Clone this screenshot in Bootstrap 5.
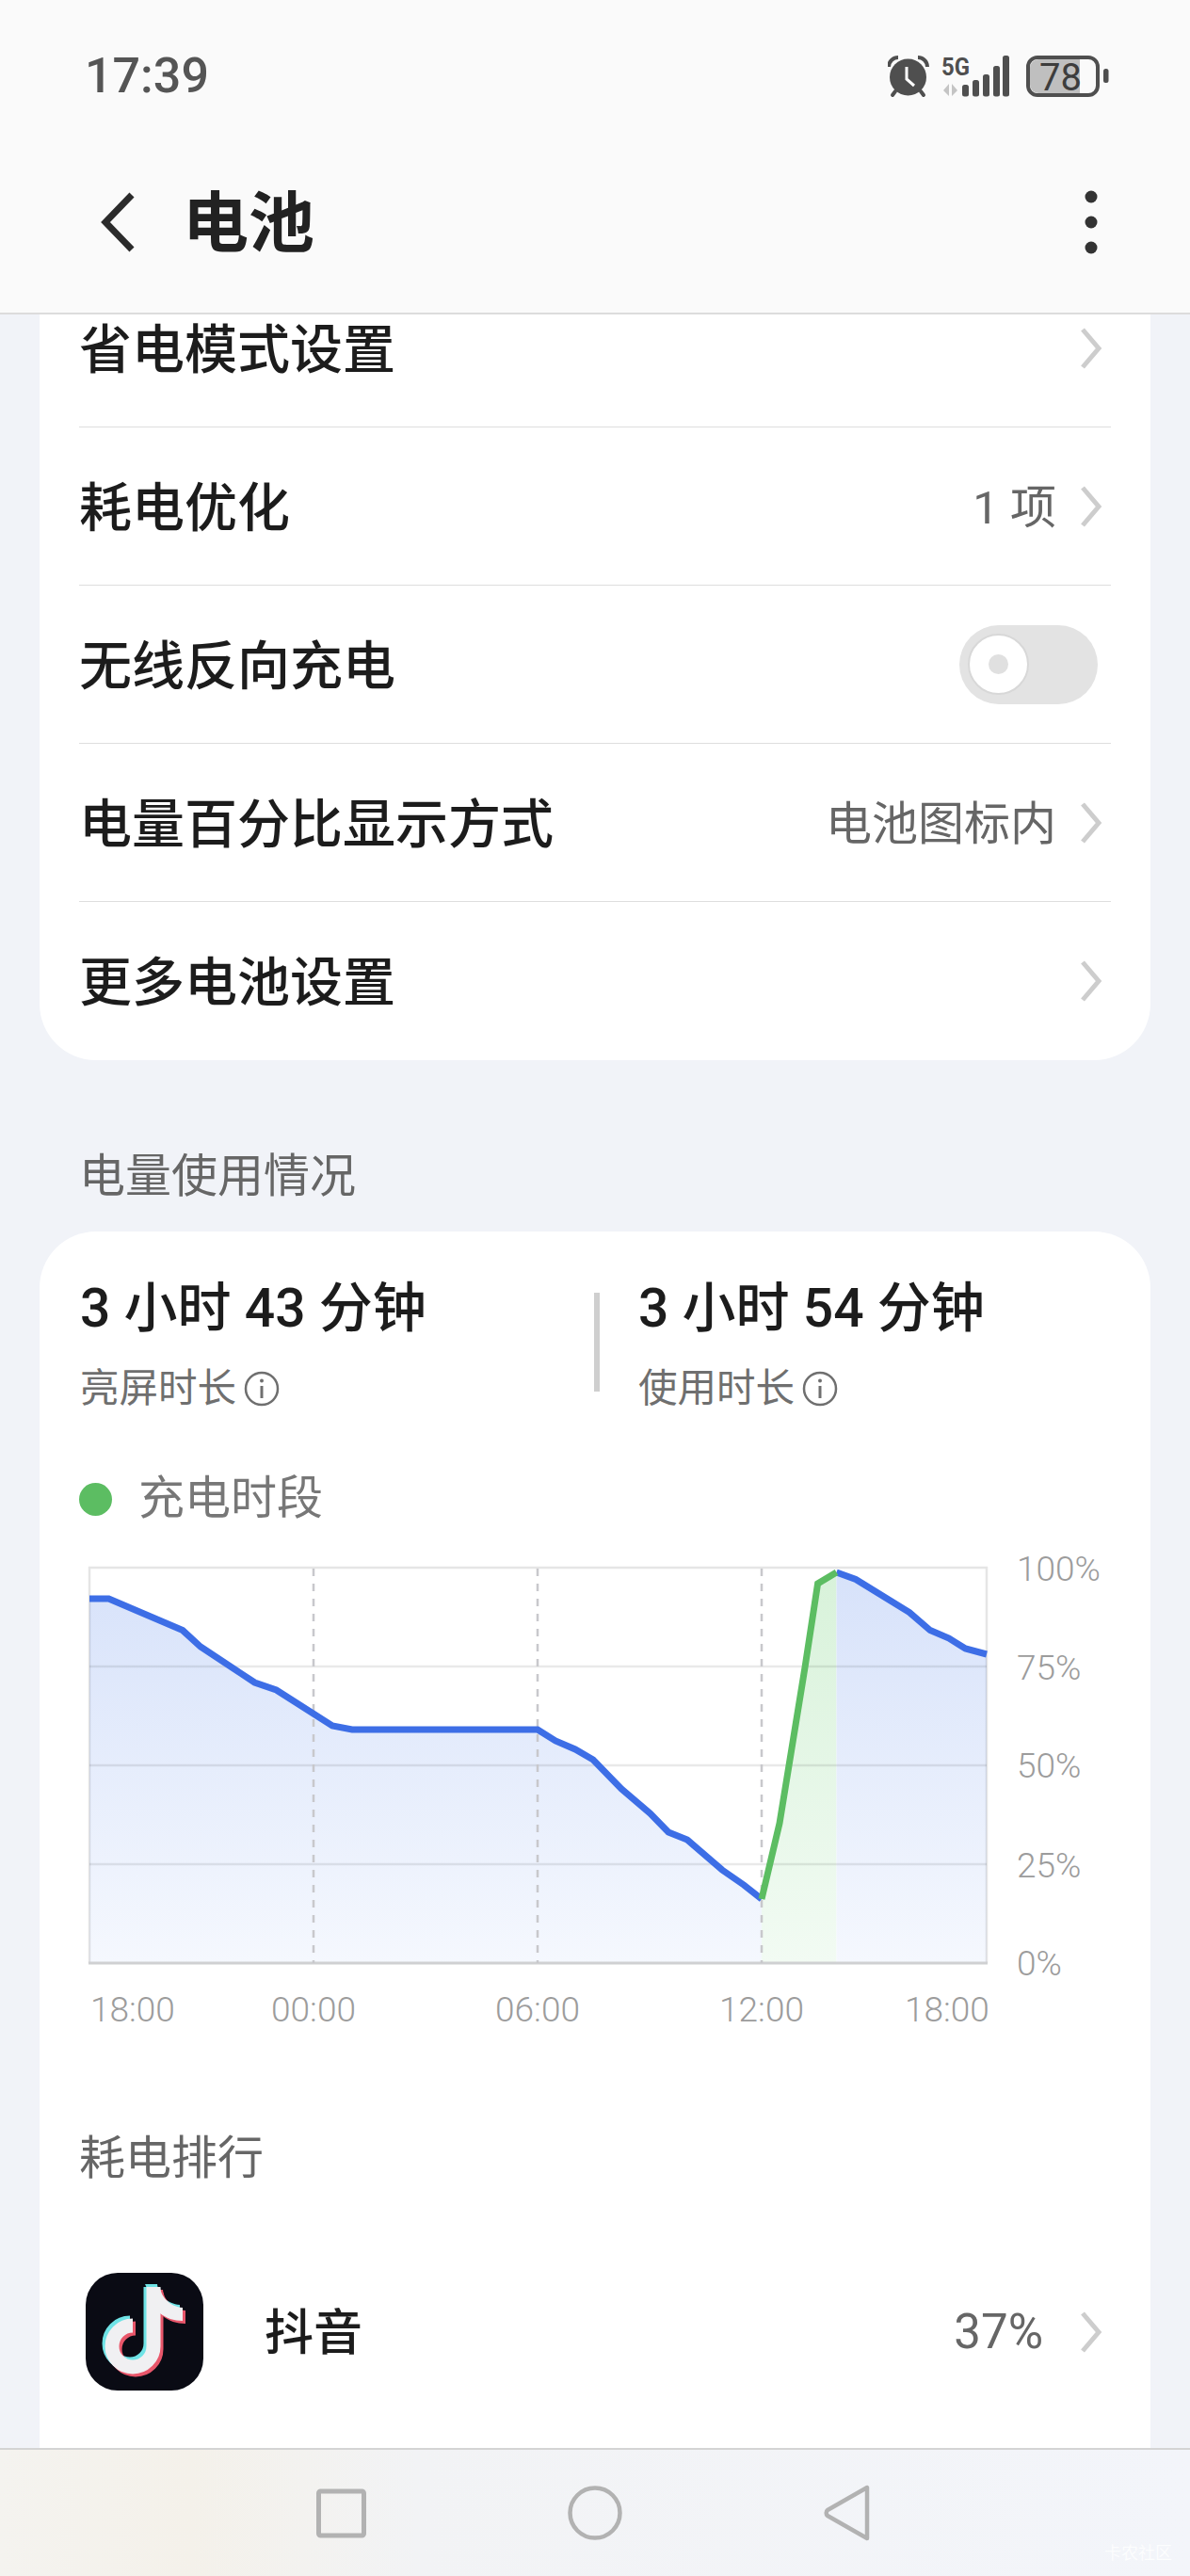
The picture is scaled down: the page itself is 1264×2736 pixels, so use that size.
<!DOCTYPE html>
<html lang="zh-CN">
<head>
  <meta charset="UTF-8">
  <title>电池</title>
  <meta name="viewport" content="width=device-width, initial-scale=1" />
  <link href="https://cdn.jsdelivr.net/npm/bootstrap@5.3.0/dist/css/bootstrap.min.css" rel="stylesheet">
  <style>
    html, body {
      margin: 0;
      height: 2736px;
      overflow: hidden;
    }

    body {
      background-color: #f1f3f8;
      font-family: Roboto, "Noto Sans CJK SC", sans-serif;
      color: #1c1c1c;
    }

    .phone {
      height: 2736px;
    }

    .top-area {
      height: 334px;
      flex: none;
      background-color: #fafafa;
      border-bottom: 2px solid #dcdcdc;
      position: relative;
      z-index: 2;
    }

    .status-row {
      height: 150px;
      padding: 12px 86px 0 90px;
    }

    .clock {
      font-size: 52px;
      font-weight: 500;
      color: #555;
    }

    .title-row {
      height: 172px;
      padding: 0 98px 0 106px;
    }

    .page-name {
      font-size: 70px;
      font-weight: 700;
      line-height: 1;
      margin-left: 50px;
      padding-top: 3px;
      color: #222;
    }

    .scroll-area {
      min-height: 0;
      overflow: hidden;
    }

    .scroll-inner {
      margin-top: -48px;
      padding: 0 42px;
    }

    .panel {
      border: 0;
      border-radius: 60px;
      background-color: #fff;
    }

    .panel-top {
      border-radius: 0 0 60px 60px;
    }

    .panel-bottom {
      border-radius: 60px 60px 0 0;
      padding: 48px 0 0 42px;
      height: 1400px;
    }

    .set-row {
      height: 168px;
      margin: 0 42px;
      padding: 0 9px 0 0;
      background: transparent;
      border-color: #dedede;
      border-width: 0 0 2px;
      font-size: 56px;
      font-weight: 500;
      color: #1c1c1c;
    }

    .set-row:last-child {
      border-bottom: 0;
    }

    .set-text {
      padding-top: 4px;
    }

    .set-value {
      font-size: 49px;
      font-weight: 400;
      color: #666;
      margin-right: 25px;
      padding-top: 4px;
    }

    .sw-track {
      width: 147px;
      height: 84px;
      margin-right: 5px;
      border-radius: 42px;
      background-color: #e3e3e3;
      padding-left: 9px;
    }

    .sw-knob {
      width: 65px;
      height: 65px;
      border-radius: 50%;
      background-color: #fff;
      border: 2px solid #d8d8d8;
    }

    .sw-dot {
      width: 21px;
      height: 21px;
      border-radius: 50%;
      background-color: #e0e0e0;
    }

    .group-label {
      font-size: 49px;
      line-height: 68px;
      color: #666;
      margin-left: 42px;
    }

    .label-usage {
      padding: 90px 0 24px;
    }

    .stat-left {
      width: 547px;
      flex: none;
      padding-left: 1px;
    }

    .stat-time {
      font-size: 57px;
      line-height: 68px;
      font-weight: 500;
    }

    .stat-sub {
      font-size: 41.500px;
      line-height: 60px;
      margin-top: 21px;
      color: #6f6f6f;
    }

    .stat-bar {
      width: 6px;
      height: 105px;
      margin: 17px 41px 0 0;
      background-color: #cfcfcf;
      flex: none;
    }

    .charge-row {
      font-size: 49px;
      line-height: 60px;
      color: #777;
      margin-top: 57px;
    }

    .charge-dot {
      width: 35px;
      height: 35px;
      border-radius: 50%;
      background-color: #5cbd62;
      margin-right: 28px;
    }

    .chart-box {
      display: block;
      width: 1180px;
      height: 530px;
      margin: 18px 0 0 -42px;
    }

    .chart-box text {
      font-family: Roboto, sans-serif;
      font-size: 37px;
      font-weight: 300;
      fill: #9c9c9c;
    }

    .label-rank {
      margin: 89px 0 87px 1px;
    }

    .app-row {
      margin-left: 7px;
      padding-right: 51px;
    }

    .app-name {
      font-size: 52px;
      margin-left: 65px;
      padding-top: 5px;
      font-weight: 500;
    }

    .app-share {
      font-size: 51px;
      color: #666;
      margin-right: 39px;
      padding-top: 2px;
    }

    .bottom-nav {
      height: 136px;
      flex: none;
      gap: 214px;
      padding-left: 336px;
      border-top: 2px solid #d4d4d4;
      background: linear-gradient(90deg, #f4f3ef 0, #f4f1ea 16%, #f2f3f5 35%, #f3f5fa 100%);
      position: relative;
      z-index: 2;
    }

    .water-mark {
      position: absolute;
      left: 1173px;
      top: 96px;
      font-size: 18px;
      color: #fff;
      opacity: .8;
    }
  </style>
</head>
<body>
<div class="phone d-flex flex-column">

  <!-- Status bar + title -->
  <div class="top-area">
    <div class="status-row d-flex align-items-center justify-content-between">
      <span class="clock">17:39</span>
      <svg width="235" height="64" viewBox="943 49 235 64">
        <!-- alarm -->
        <circle cx="964.500" cy="82" r="19.500" fill="#4f4f4f"/>
        <path d="M944 71c0-6 5-10 10-10M985 71c0-6-5-10-10-10" fill="none" stroke="#4f4f4f" stroke-width="4"/>
        <path d="M951 97l-3 4M978 97l3 4" stroke="#4f4f4f" stroke-width="4" stroke-linecap="round"/>
        <path d="M963 71v13l8 7" fill="none" stroke="#fff" stroke-width="3"/>
        <!-- 5G -->
        <text x="1000" y="80" font-family="Roboto, sans-serif" font-size="26" font-weight="700" fill="#4f4f4f" textLength="30" lengthAdjust="spacingAndGlyphs">5G</text>
        <path d="M1008 89v13l-6-6zM1011 89v13l6-6" fill="#c4c4c4"/>
        <g fill="#4f4f4f">
          <rect x="1022" y="90" width="7" height="12.500" rx="2.500"/>
          <rect x="1033" y="85" width="7" height="17.500" rx="2.500"/>
          <rect x="1044" y="79" width="7" height="23.500" rx="2.500"/>
          <rect x="1055" y="70" width="7" height="32.500" rx="2.500"/>
          <rect x="1065" y="59" width="7" height="43.500" rx="2.500"/>
        </g>
        <!-- battery -->
        <rect x="1092" y="61" width="74" height="40" rx="10" fill="none" stroke="#4f4f4f" stroke-width="4"/>
        <path d="M1103 63h44v36h-44a9 9 0 0 1-9-9V72a9 9 0 0 1 9-9z" fill="#bfbfbf"/>
        <text x="1104" y="96" font-family="Roboto, sans-serif" font-size="40" fill="#3d3d3d">78</text>
        <rect x="1172" y="73" width="5.500" height="15" rx="2.500" fill="#4f4f4f"/>
      </svg>
    </div>
    <div class="title-row d-flex align-items-center">
      <svg width="38" height="66" viewBox="0 0 38 66" class="flex-none">
        <path d="M34 4L6 33l28 29" fill="none" stroke="#2b2b2b" stroke-width="7"/>
      </svg>
      <span class="page-name flex-grow-1">电池</span>
      <div class="d-flex flex-column">
        <svg width="14" height="68" viewBox="0 0 14 68">
          <circle cx="7" cy="7" r="6.500" fill="#333"/>
          <circle cx="7" cy="34" r="6.500" fill="#333"/>
          <circle cx="7" cy="61" r="6.500" fill="#333"/>
        </svg>
      </div>
    </div>
  </div>

  <!-- Scrolled settings content -->
  <div class="scroll-area flex-grow-1">
    <div class="scroll-inner">

      <div class="panel panel-top list-group list-group-flush">
        <div class="list-group-item set-row d-flex align-items-center justify-content-between">
          <span class="set-text">省电模式设置</span>
          <svg width="24" height="44" viewBox="0 0 24 44"><path d="M3 2l17 20L3 42" fill="none" stroke="#cdcdcd" stroke-width="5"/></svg>
        </div>
        <div class="list-group-item set-row d-flex align-items-center">
          <span class="set-text flex-grow-1">耗电优化</span>
          <span class="set-value">1 项</span>
          <svg width="24" height="44" viewBox="0 0 24 44"><path d="M3 2l17 20L3 42" fill="none" stroke="#cdcdcd" stroke-width="5"/></svg>
        </div>
        <div class="list-group-item set-row d-flex align-items-center justify-content-between">
          <span class="set-text">无线反向充电</span>
          <div class="sw-track d-flex align-items-center">
            <div class="sw-knob d-flex align-items-center justify-content-center"><div class="sw-dot"></div></div>
          </div>
        </div>
        <div class="list-group-item set-row d-flex align-items-center">
          <span class="set-text flex-grow-1">电量百分比显示方式</span>
          <span class="set-value">电池图标内</span>
          <svg width="24" height="44" viewBox="0 0 24 44"><path d="M3 2l17 20L3 42" fill="none" stroke="#cdcdcd" stroke-width="5"/></svg>
        </div>
        <div class="list-group-item set-row d-flex align-items-center justify-content-between">
          <span class="set-text">更多电池设置</span>
          <svg width="24" height="44" viewBox="0 0 24 44"><path d="M3 2l17 20L3 42" fill="none" stroke="#cdcdcd" stroke-width="5"/></svg>
        </div>
      </div>

      <div class="group-label label-usage">电量使用情况</div>

      <div class="panel panel-bottom">
        <div class="d-flex">
          <div class="stat-left">
            <div class="stat-time">3 小时 43 分钟</div>
            <div class="stat-sub d-flex align-items-center">亮屏时长
              <svg class="ms-2" width="38" height="38" viewBox="0 0 38 38"><circle cx="19" cy="19" r="17" fill="none" stroke="#6f6f6f" stroke-width="2.500"/><path d="M19 16v13" stroke="#6f6f6f" stroke-width="3"/><circle cx="19" cy="10.500" r="2" fill="#6f6f6f"/></svg>
            </div>
          </div>
          <div class="stat-bar"></div>
          <div>
            <div class="stat-time">3 小时 54 分钟</div>
            <div class="stat-sub d-flex align-items-center">使用时长
              <svg class="ms-2" width="38" height="38" viewBox="0 0 38 38"><circle cx="19" cy="19" r="17" fill="none" stroke="#6f6f6f" stroke-width="2.500"/><path d="M19 16v13" stroke="#6f6f6f" stroke-width="3"/><circle cx="19" cy="10.500" r="2" fill="#6f6f6f"/></svg>
            </div>
          </div>
        </div>

        <div class="charge-row d-flex align-items-center"><span class="charge-dot"></span>充电时段</div>

        <svg class="chart-box" viewBox="42 1640 1180 530">
          <defs>
            <linearGradient id="blueFill" x1="0" y1="1670" x2="0" y2="2085" gradientUnits="userSpaceOnUse">
              <stop offset="0" stop-color="#d7e2fa"/>
              <stop offset="1" stop-color="#f5f8fe"/>
            </linearGradient>
            <linearGradient id="greenFill" x1="0" y1="1670" x2="0" y2="2085" gradientUnits="userSpaceOnUse">
              <stop offset="0" stop-color="#d8f2da"/>
              <stop offset="1" stop-color="#f2fbf3"/>
            </linearGradient>
          </defs>

          <!-- area under the line -->
          <path d="M95 1698L115.500 1698 194 1731.600 213 1749 270.500 1787 293.500 1795 353 1833 374 1837 571 1837 590 1849 611 1858 630 1869 660 1900 690.600 1926 710 1946 730 1954 767 1986 790 2002 809 2017V2085H95Z" fill="url(#blueFill)"/>
          <path d="M809 2017L828 1936.500 855 1771 868.600 1682 888.500 1670V2085H809Z" fill="url(#greenFill)"/>
          <path d="M888.500 1670L909 1677.500 966 1712.600 988 1731.600 1008 1740 1025.500 1751 1048 1757V2085H888.500Z" fill="url(#blueFill)"/>

          <!-- grid -->
          <g stroke="#000" stroke-opacity=".085" stroke-width="2.500">
            <path d="M95 1770H1048M95 1875H1048M95 1980H1048"/>
          </g>
          <path d="M95 2085V1665H1048V2085" fill="none" stroke="#000" stroke-opacity=".1" stroke-width="2.500"/>
          <path d="M94 2085H1049" stroke="#cfd0d2" stroke-width="3"/>
          <path d="M333 1666V2085M571 1666V2085M809 1666V2085" stroke="#c8c8cc" stroke-width="2.500" stroke-dasharray="8 8"/>

          <!-- battery line -->
          <path d="M95 1698L115.500 1698 194 1731.600 213 1749 270.500 1787 293.500 1795 353 1833 374 1837 571 1837 590 1849 611 1858 630 1869 660 1900 690.600 1926 710 1946 730 1954 767 1986 790 2002 809 2017" fill="none" stroke="#3d6ee6" stroke-width="7"/>
          <path d="M888.500 1670L909 1677.500 966 1712.600 988 1731.600 1008 1740 1025.500 1751 1048 1757" fill="none" stroke="#3d6ee6" stroke-width="7"/>
          <path d="M809 2017L828 1936.500 855 1771 868.600 1682 888.500 1670" fill="none" stroke="#5cbd62" stroke-width="7"/>

          <!-- axis labels -->
          <text x="1080" y="1679">100%</text>
          <text x="1080" y="1784">75%</text>
          <text x="1080" y="1888">50%</text>
          <text x="1080" y="1994">25%</text>
          <text x="1080" y="2098">0%</text>
          <text x="96" y="2147">18:00</text>
          <text x="333" y="2147" text-anchor="middle">00:00</text>
          <text x="571" y="2147" text-anchor="middle">06:00</text>
          <text x="809" y="2147" text-anchor="middle">12:00</text>
          <text x="961" y="2147">18:00</text>
        </svg>

        <div class="group-label label-rank ms-0">耗电排行</div>

        <div class="app-row d-flex align-items-center">
          <svg width="125" height="125" viewBox="0 0 125 125" class="flex-none">
            <rect width="125" height="125" rx="34" fill="#0a0b14"/>
            <g fill="none" stroke-width="15">
              <path d="M69 15V75A22 22 0 1 1 47 53" stroke="#6fe3e6"/>
              <path d="M75 21V81A22 22 0 1 1 53 59" stroke="#e8566a"/>
            </g>
            <path d="M63 12h13c1 11 11 21 24 22v14c-9 0-18-3-24-8z" fill="#6fe3e6"/>
            <path d="M69 18h13c1 11 11 21 24 22v14c-9 0-18-3-24-8z" fill="#e8566a"/>
            <path d="M72 15V78A22 22 0 1 1 50 56" fill="none" stroke="#f0f0f2" stroke-width="15"/>
            <path d="M66 15h13c1 11 11 21 24 22v14c-9 0-18-3-24-8z" fill="#f0f0f2"/>
          </svg>
          <span class="app-name flex-grow-1">抖音</span>
          <span class="app-share">37%</span>
          <svg width="24" height="44" viewBox="0 0 24 44"><path d="M3 2l17 20L3 42" fill="none" stroke="#cdcdcd" stroke-width="5"/></svg>
        </div>
      </div>

    </div>
  </div>

  <!-- System navigation -->
  <div class="bottom-nav d-flex align-items-center">
    <svg width="53" height="53" viewBox="0 0 53 53"><rect x="2.500" y="3" width="48" height="47" rx="2" fill="none" stroke="#b2b2b2" stroke-width="5"/></svg>
    <svg width="58" height="58" viewBox="0 0 58 58"><circle cx="29" cy="29" r="26.500" fill="none" stroke="#b2b2b2" stroke-width="4.500"/></svg>
    <svg width="50" height="60" viewBox="0 0 50 60"><path d="M46 3v54L4 33a4 4 0 0 1 0-6z" fill="none" stroke="#b2b2b2" stroke-width="4.500" stroke-linejoin="round"/></svg>
    <span class="water-mark">卡农社区</span>
  </div>
</div>

<script src="https://cdn.jsdelivr.net/npm/bootstrap@5.3.0/dist/js/bootstrap.bundle.min.js"></script>
</body>
</html>
